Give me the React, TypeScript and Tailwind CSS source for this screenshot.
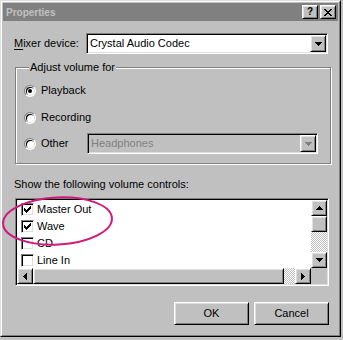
import React from "react";

const raised =
  "border border-white border-r-black border-b-black shadow-[inset_1px_1px_0_#dfdfdf,inset_-1px_-1px_0_#808080]";
const sunken =
  "border border-[#808080] border-r-white border-b-white shadow-[inset_1px_1px_0_#000,inset_-1px_-1px_0_#dfdfdf]";
const dither =
  "bg-[repeating-conic-gradient(#c0c0c0_0%_25%,#ffffff_0%_50%)] bg-[length:2px_2px]";

type Dir = "up" | "down" | "left" | "right";

function Arrow({ dir, color = "#000" }: { dir: Dir; color?: string }) {
  const paths: Record<Dir, string> = {
    down: "M0 0h7v1H0zM1 1h5v1H1zM2 2h3v1H2zM3 3h1v1H3z",
    up: "M3 0h1v1H3zM2 1h3v1H2zM1 2h5v1H1zM0 3h7v1H0z",
    right: "M0 0h1v7H0zM1 1h1v5H1zM2 2h1v3H2zM3 3h1v1H3z",
    left: "M3 0h1v7H3zM2 1h1v5H2zM1 2h1v3H1zM0 3h1v1H0z",
  };
  const horiz = dir === "up" || dir === "down";
  return (
    <svg width={horiz ? 7 : 4} height={horiz ? 4 : 7} shapeRendering="crispEdges">
      <path d={paths[dir]} fill={color} />
    </svg>
  );
}

function ArrowButton({ dir, disabled }: { dir: Dir; disabled?: boolean }) {
  return (
    <div className={`${raised} bg-[#c0c0c0] w-[16px] h-[16px] flex items-center justify-center`}>
      {disabled ? (
        <div className="relative">
          <div className="absolute left-px top-px">
            <Arrow dir={dir} color="#fff" />
          </div>
          <div className="relative">
            <Arrow dir={dir} color="#808080" />
          </div>
        </div>
      ) : (
        <Arrow dir={dir} />
      )}
    </div>
  );
}

function Combo({ text, width, disabled }: { text: string; width: string; disabled?: boolean }) {
  return (
    <div className={`${sunken} ${width} h-[21px] p-px flex ${disabled ? "bg-[#c0c0c0]" : "bg-white"}`}>
      <div className={`flex-1 flex items-center pl-[2px] ${disabled ? "text-[#808080]" : ""}`}>{text}</div>
      <div
        className={`${raised} bg-[#c0c0c0] w-[16px] h-[17px] flex items-center justify-center`}
      >
        <Arrow dir="down" color={disabled ? "#808080" : "#000"} />
      </div>
    </div>
  );
}

function Radio({ checked }: { checked?: boolean }) {
  return (
    <div className="w-[12px] h-[12px] rounded-full border border-[#808080] border-r-white border-b-white bg-[#dfdfdf] p-px">
      <div className="w-full h-full rounded-full bg-white shadow-[inset_1px_1px_0_#000] flex items-center justify-center">
        {checked && <div className="w-[4px] h-[4px] rounded-full bg-black" />}
      </div>
    </div>
  );
}

function Check({ checked }: { checked?: boolean }) {
  return (
    <div className={`${sunken} w-[13px] h-[13px] bg-white flex items-center justify-center`}>
      {checked && (
        <svg width="7" height="7" shapeRendering="crispEdges">
          <path
            d="M6 0h1v1H6zM5 1h2v1H5zM0 2h1v1H0zM4 2h3v1H4zM0 3h2v1H0zM3 3h3v1H3zM0 4h5v1H0zM1 5h3v1H1zM2 6h1v1H2z"
            fill="#000"
          />
        </svg>
      )}
    </div>
  );
}

function TitleBar() {
  return (
    <div className="h-[18px] bg-[#808080] flex items-center pl-[3px] pr-[2px]">
      <span className="flex-1 text-[10px] font-bold text-[#c0c0c0]">Properties</span>
      <div className="flex gap-[2px]">
        <div className={`${raised} bg-[#c0c0c0] w-[16px] h-[14px] flex items-center justify-center text-[10px] font-bold leading-none`}>
          ?
        </div>
        <div className={`${raised} bg-[#c0c0c0] w-[16px] h-[14px] flex items-center justify-center`}>
          <svg width="8" height="7" shapeRendering="crispEdges">
            <path
              d="M0 0h2v1H0zM6 0h2v1H6zM1 1h2v1H1zM5 1h2v1H5zM2 2h4v1H2zM3 3h2v1H3zM2 4h4v1H2zM1 5h2v1H1zM5 5h2v1H5zM0 6h2v1H0zM6 6h2v1H6z"
              fill="#000"
            />
          </svg>
        </div>
      </div>
    </div>
  );
}

const controls = [
  { label: "Master Out", checked: true },
  { label: "Wave", checked: true },
  { label: "CD", checked: false },
  { label: "Line In", checked: false },
];

export default function App() {
  return (
    <div className="relative w-[343px] h-[340px] bg-[#c0c0c0] font-['Liberation_Sans',Arial,sans-serif] text-[11px] leading-[13px] text-black">
      <div className="w-[341px] h-[337px] border border-[#dfdfdf] border-r-black border-b-black">
        <div className="h-full border border-white border-r-[#808080] border-b-[#808080] p-px">
          <TitleBar />

          <div className="pl-[11px]">
            <div className="mt-[12px] flex items-center">
              <div className="w-[72px]">
                <span className="underline underline-offset-2">M</span>ixer device:
              </div>
              <Combo text="Crystal Audio Codec" width="w-[242px]" />
            </div>

            <fieldset className="ml-px mt-[7px] w-[316px] border border-[#808080] shadow-[inset_1px_1px_0_#fff,1px_1px_0_#fff] pl-[8px] pb-[9px]">
              <legend className="ml-[5px] px-px bg-[#c0c0c0]">Adjust volume for</legend>
              <div className="mt-[6px] h-[21px] flex items-center">
                <Radio checked />
                <span className="ml-[5px]">Playback</span>
              </div>
              <div className="mt-[6px] h-[21px] flex items-center">
                <Radio />
                <span className="ml-[5px]">Recording</span>
              </div>
              <div className="mt-[5px] h-[21px] flex items-center">
                <Radio />
                <span className="ml-[5px] w-[46px]">Other</span>
                <Combo text="Headphones" width="w-[231px]" disabled />
              </div>
            </fieldset>

            <div className="mt-[14px]">Show the following volume controls:</div>

            <div className={`${sunken} ml-px mt-[7px] w-[314px] h-[88px] p-px grid grid-cols-[1fr_16px] grid-rows-[1fr_16px]`}>
              <div className="bg-white overflow-hidden pt-px">
                {controls.map((c) => (
                  <div key={c.label} className="h-[17px] flex items-center pl-[4px]">
                    <Check checked={c.checked} />
                    <span className="ml-[3px]">{c.label}</span>
                  </div>
                ))}
              </div>
              <div className="flex flex-col">
                <ArrowButton dir="up" />
                <div className={`${raised} bg-[#c0c0c0] h-[16px]`} />
                <div className={`flex-1 ${dither}`} />
                <ArrowButton dir="down" />
              </div>
              <div className="flex">
                <ArrowButton dir="left" />
                <div className={`${raised} bg-[#c0c0c0] w-[251px]`} />
                <div className={`flex-1 ${dither}`} />
                <ArrowButton dir="right" />
              </div>
              <div className="bg-[#c0c0c0]" />
            </div>

            <div className="mt-[16px] ml-[160px] flex gap-[5px]">
              <button className={`${raised} bg-[#c0c0c0] w-[75px] h-[23px]`}>OK</button>
              <button className={`${raised} bg-[#c0c0c0] w-[75px] h-[23px]`}>Cancel</button>
            </div>
          </div>
        </div>
      </div>

      <svg className="absolute left-0 top-0 pointer-events-none" width="343" height="340">
        <ellipse
          cx="57.5"
          cy="221"
          rx="54.5"
          ry="23.5"
          transform="rotate(-3 57.5 221)"
          fill="none"
          stroke="#d2187a"
          strokeWidth="2"
        />
      </svg>
    </div>
  );
}
